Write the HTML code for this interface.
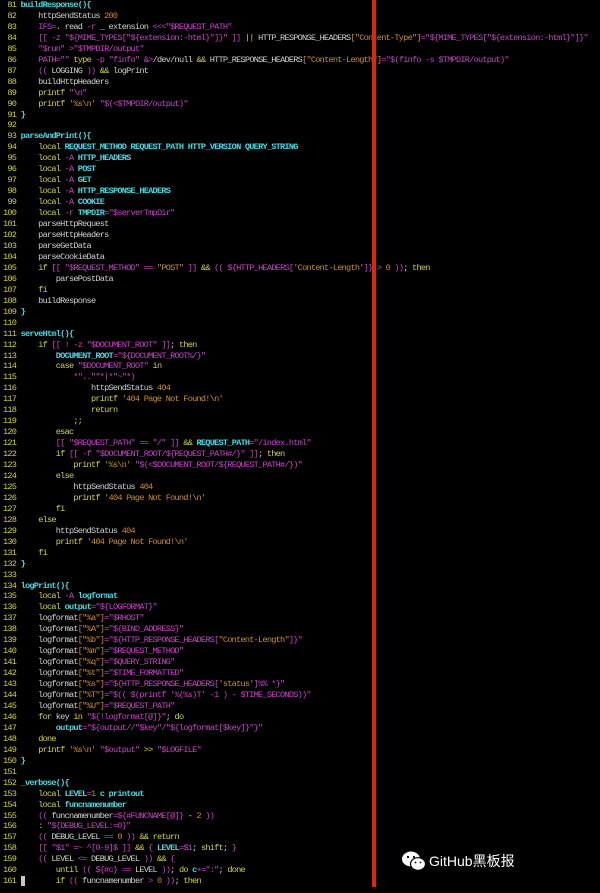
<!DOCTYPE html>
<html><head><meta charset="utf-8"><style>
html,body{margin:0;padding:0;background:#000;width:600px;height:893px;overflow:hidden}
pre{margin:0;position:absolute;left:3px;top:0;font-family:"Liberation Mono",monospace;font-size:8.6px;letter-spacing:-0.76px;line-height:10.95px;color:#d0d0d0;white-space:pre}
.n{color:#d0d040}.y{color:#d2d240}.m{color:#cc40cc}.o{color:#d08c2c}.c{color:#48d8e4;font-weight:bold}
#red{position:absolute;left:372px;top:0;width:4px;height:887px;background:#d42a10}
#wm{position:absolute;left:401px;top:850px;color:#fff;font-family:"Liberation Sans","Noto Sans CJK SC",sans-serif;font-size:14px;display:flex;align-items:center}
</style></head><body>
<pre><span class="n"> 81 </span><span class="c">buildResponse(){</span>
<span class="n"> 82 </span>    httpSendStatus <span class="o">200</span>
<span class="n"> 83 </span>    <span class="m">IFS=</span>. read <span class="m">-r</span> _ extension <span class="m">&lt;&lt;&lt;"$REQUEST_PATH"</span>
<span class="n"> 84 </span>    <span class="m">[[ -z "${MIME_TYPES["${extension:-html}"]}" ]]</span> <span class="y">||</span> HTTP_RESPONSE_HEADERS<span class="o">["Content-Type"]</span><span class="m">="${MIME_TYPES["${extension:-html}"]}"</span>
<span class="n"> 85 </span>    <span class="m">"$run" &gt;"$TMPDIR/output"</span>
<span class="n"> 86 </span>    <span class="m">PATH=""</span> <span class="y">type</span> <span class="m">-p</span> <span class="m">"finfo"</span> <span class="m">&amp;&gt;</span>/dev/null <span class="y">&amp;&amp;</span> HTTP_RESPONSE_HEADERS<span class="o">["Content-Length"]</span><span class="m">="$(finfo -s $TMPDIR/output)"</span>
<span class="n"> 87 </span>    <span class="m">((</span> LOGGING <span class="m">))</span> <span class="y">&amp;&amp;</span> logPrint
<span class="n"> 88 </span>    buildHttpHeaders
<span class="n"> 89 </span>    <span class="y">printf</span> <span class="m">"\n"</span>
<span class="n"> 90 </span>    <span class="y">printf</span> <span class="o">'%s\n'</span> <span class="m">"$(&lt;$TMPDIR/output)"</span>
<span class="n"> 91 </span><span class="c">}</span>
<span class="n"> 92 </span>
<span class="n"> 93 </span><span class="c">parseAndPrint(){</span>
<span class="n"> 94 </span>    <span class="y">local</span> <span class="c">REQUEST_METHOD REQUEST_PATH HTTP_VERSION QUERY_STRING</span>
<span class="n"> 95 </span>    <span class="y">local</span> <span class="m">-A</span> <span class="c">HTTP_HEADERS</span>
<span class="n"> 96 </span>    <span class="y">local</span> <span class="m">-A</span> <span class="c">POST</span>
<span class="n"> 97 </span>    <span class="y">local</span> <span class="m">-A</span> <span class="c">GET</span>
<span class="n"> 98 </span>    <span class="y">local</span> <span class="m">-A</span> <span class="c">HTTP_RESPONSE_HEADERS</span>
<span class="n"> 99 </span>    <span class="y">local</span> <span class="m">-A</span> <span class="c">COOKIE</span>
<span class="n">100 </span>    <span class="y">local</span> <span class="m">-r</span> <span class="c">TMPDIR</span><span class="m">="$serverTmpDir"</span>
<span class="n">101 </span>    parseHttpRequest
<span class="n">102 </span>    parseHttpHeaders
<span class="n">103 </span>    parseGetData
<span class="n">104 </span>    parseCookieData
<span class="n">105 </span>    <span class="y">if</span> <span class="m">[[ "$REQUEST_METHOD" == </span><span class="o">"POST"</span><span class="m"> ]]</span> <span class="y">&amp;&amp;</span> <span class="m">(( ${HTTP_HEADERS[</span><span class="o">'Content-Length'</span><span class="m">]} &gt; </span><span class="o">0</span><span class="m"> ))</span>; <span class="y">then</span>
<span class="n">106 </span>        parsePostData
<span class="n">107 </span>    <span class="y">fi</span>
<span class="n">108 </span>    buildResponse
<span class="n">109 </span><span class="c">}</span>
<span class="n">110 </span>
<span class="n">111 </span><span class="c">serveHtml(){</span>
<span class="n">112 </span>    <span class="y">if</span> <span class="m">[[ ! -z "$DOCUMENT_ROOT" ]]</span>; <span class="y">then</span>
<span class="n">113 </span>        <span class="c">DOCUMENT_ROOT</span><span class="m">="${DOCUMENT_ROOT%/}"</span>
<span class="n">114 </span>        <span class="y">case</span> <span class="m">"$DOCUMENT_ROOT"</span> <span class="y">in</span>
<span class="n">115 </span>            <span class="m">*"..""*|*"~"*)</span>
<span class="n">116 </span>                httpSendStatus <span class="o">404</span>
<span class="n">117 </span>                <span class="y">printf</span> <span class="o">'404 Page Not Found!\n'</span>
<span class="n">118 </span>                <span class="y">return</span>
<span class="n">119 </span>            <span class="y">;;</span>
<span class="n">120 </span>        <span class="y">esac</span>
<span class="n">121 </span>        <span class="m">[[ "$REQUEST_PATH" == "/" ]]</span> <span class="y">&amp;&amp;</span> <span class="c">REQUEST_PATH</span><span class="m">="/index.html"</span>
<span class="n">122 </span>        <span class="y">if</span> <span class="m">[[ -f "$DOCUMENT_ROOT/${REQUEST_PATH#/}" ]]</span>; <span class="y">then</span>
<span class="n">123 </span>            <span class="y">printf</span> <span class="o">'%s\n'</span> <span class="m">"$(&lt;$DOCUMENT_ROOT/${REQUEST_PATH#/})"</span>
<span class="n">124 </span>        <span class="y">else</span>
<span class="n">125 </span>            httpSendStatus <span class="o">404</span>
<span class="n">126 </span>            <span class="y">printf</span> <span class="o">'404 Page Not Found!\n'</span>
<span class="n">127 </span>        <span class="y">fi</span>
<span class="n">128 </span>    <span class="y">else</span>
<span class="n">129 </span>        httpSendStatus <span class="o">404</span>
<span class="n">130 </span>        <span class="y">printf</span> <span class="o">'404 Page Not Found!\n'</span>
<span class="n">131 </span>    <span class="y">fi</span>
<span class="n">132 </span><span class="c">}</span>
<span class="n">133 </span>
<span class="n">134 </span><span class="c">logPrint(){</span>
<span class="n">135 </span>    <span class="y">local</span> <span class="m">-A</span> <span class="c">logformat</span>
<span class="n">136 </span>    <span class="y">local</span> <span class="c">output</span><span class="m">="${LOGFORMAT}"</span>
<span class="n">137 </span>    logformat<span class="o">["%a"]</span><span class="m">="$RHOST"</span>
<span class="n">138 </span>    logformat<span class="o">["%A"]</span><span class="m">="${BIND_ADDRESS}"</span>
<span class="n">139 </span>    logformat<span class="o">["%b"]</span><span class="m">="${HTTP_RESPONSE_HEADERS[</span><span class="o">"Content-Length"</span><span class="m">]}"</span>
<span class="n">140 </span>    logformat<span class="o">["%m"]</span><span class="m">="$REQUEST_METHOD"</span>
<span class="n">141 </span>    logformat<span class="o">["%q"]</span><span class="m">="$QUERY_STRING"</span>
<span class="n">142 </span>    logformat<span class="o">["%t"]</span><span class="m">="$TIME_FORMATTED"</span>
<span class="n">143 </span>    logformat<span class="o">["%s"]</span><span class="m">="${HTTP_RESPONSE_HEADERS[</span><span class="o">'status'</span><span class="m">]%% *}"</span>
<span class="n">144 </span>    logformat<span class="o">["%T"]</span><span class="m">="$(( $(printf '%(%s)T' -1 ) - $TIME_SECONDS))"</span>
<span class="n">145 </span>    logformat<span class="o">["%U"]</span><span class="m">="$REQUEST_PATH"</span>
<span class="n">146 </span>    <span class="y">for</span> key <span class="y">in</span> <span class="m">"${!logformat[@]}"</span>; <span class="y">do</span>
<span class="n">147 </span>        <span class="c">output</span><span class="m">="${output//"$key"/"${logformat[$key]}"}"</span>
<span class="n">148 </span>    <span class="y">done</span>
<span class="n">149 </span>    <span class="y">printf</span> <span class="o">'%s\n'</span> <span class="m">"$output"</span> <span class="y">&gt;&gt;</span> <span class="m">"$LOGFILE"</span>
<span class="n">150 </span><span class="c">}</span>
<span class="n">151 </span>
<span class="n">152 </span><span class="c">_verbose(){</span>
<span class="n">153 </span>    <span class="y">local</span> <span class="c">LEVEL</span><span class="m">=</span><span class="o">1</span> <span class="c">c printout</span>
<span class="n">154 </span>    <span class="y">local</span> <span class="c">funcnamenumber</span>
<span class="n">155 </span>    <span class="m">((</span> funcnamenumber<span class="m">=${#FUNCNAME[@]}</span> - <span class="o">2</span> <span class="m">))</span>
<span class="n">156 </span>    <span class="y">:</span> <span class="m">"${DEBUG_LEVEL:=0}"</span>
<span class="n">157 </span>    <span class="m">((</span> DEBUG_LEVEL <span class="m">==</span> <span class="o">0</span> <span class="m">))</span> <span class="y">&amp;&amp; return</span>
<span class="n">158 </span>    <span class="m">[[ "$1" =~ ^[0-9]$ ]]</span> <span class="y">&amp;&amp;</span> <span class="m">{</span> <span class="c">LEVEL</span><span class="m">=$1</span>; <span class="y">shift</span>; <span class="m">}</span>
<span class="n">159 </span>    <span class="m">((</span> LEVEL <span class="m">&lt;=</span> DEBUG_LEVEL <span class="m">))</span> <span class="y">&amp;&amp;</span> <span class="m">{</span>
<span class="n">160 </span>        <span class="y">until</span> <span class="m">(( ${#c} ==</span> LEVEL <span class="m">))</span>; <span class="y">do</span> <span class="c">c</span><span class="m">+=":"</span>; <span class="y">done</span>
<span class="n">161 </span><span style="background:#c8c8c8">&nbsp;</span>       <span class="y">if</span> <span class="m">((</span> funcnamenumber <span class="m">&gt;</span> <span class="o">0</span> <span class="m">))</span>; <span class="y">then</span></pre>
<div id="red"></div>
<div id="wm"><svg width="26" height="22" viewBox="0 0 26 22"><ellipse cx="10" cy="9" rx="9" ry="7.5" fill="#fff"/><ellipse cx="17" cy="14" rx="7.5" ry="6.3" fill="#fff" stroke="#000" stroke-width="1.2"/><circle cx="7" cy="7" r="1.1" fill="#000"/><circle cx="13" cy="7" r="1.1" fill="#000"/><circle cx="14.5" cy="12.5" r="0.9" fill="#000"/><circle cx="19.5" cy="12.5" r="0.9" fill="#000"/></svg><span style="margin-left:2px">GitHub黑板报</span></div>
</body></html>
